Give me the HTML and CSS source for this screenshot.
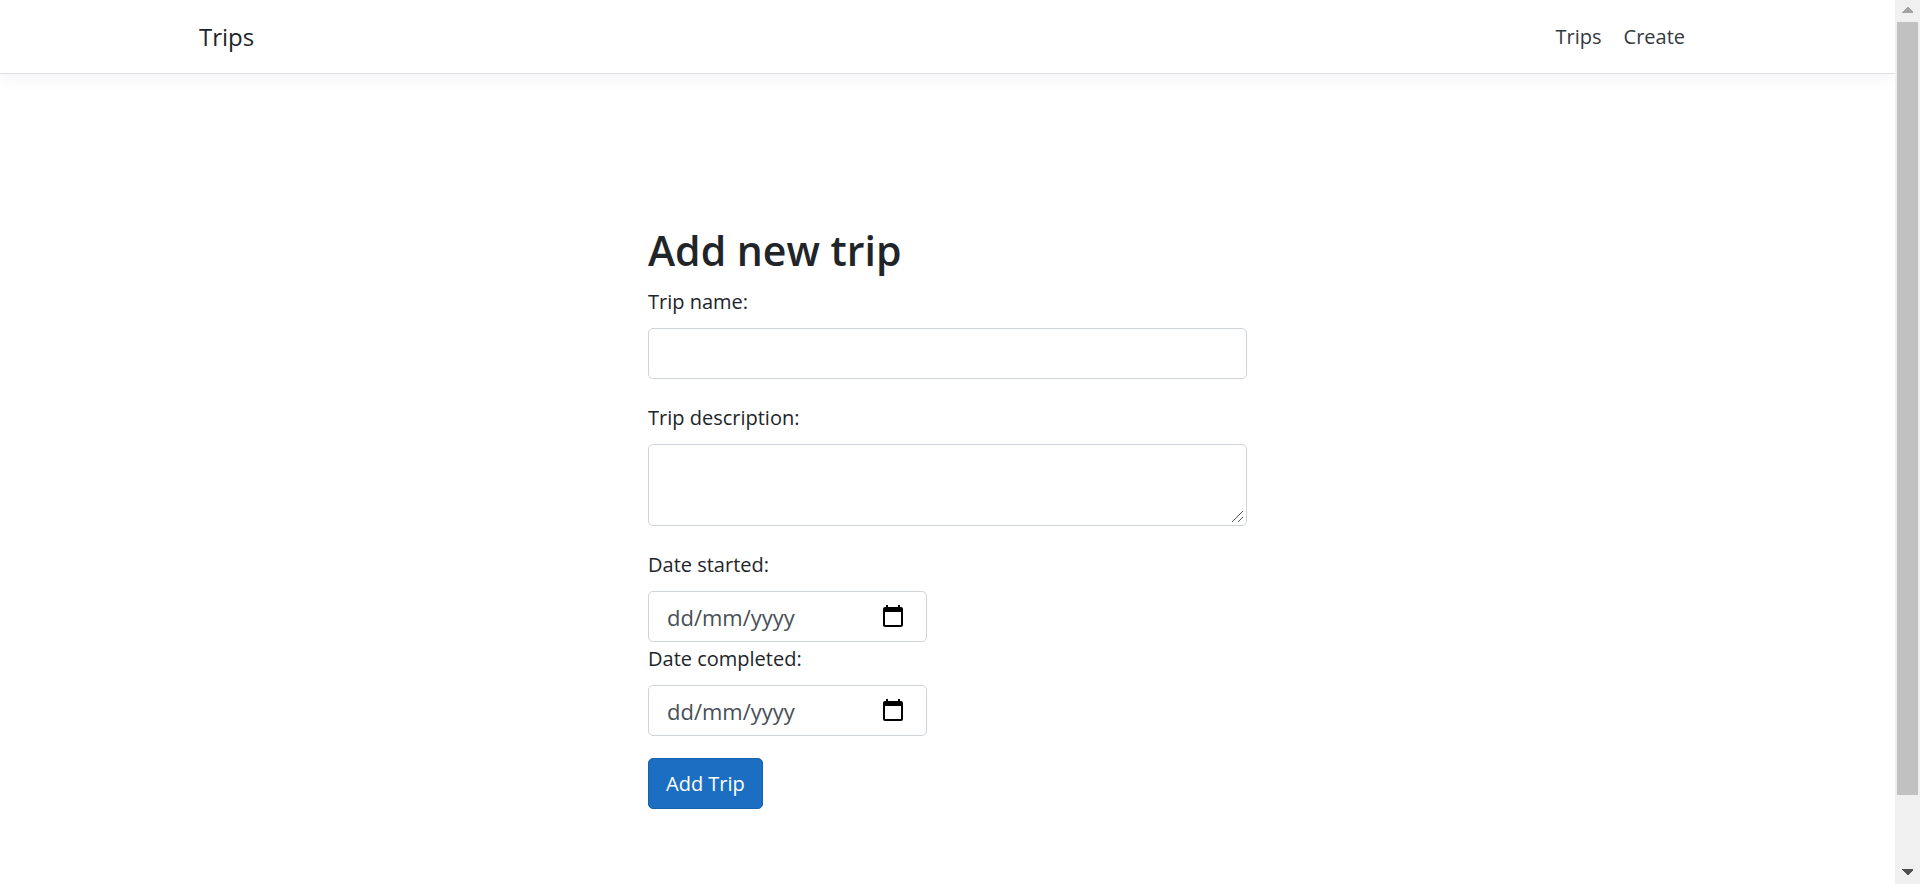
FILE: index.html
```html
<!DOCTYPE html>
<html lang="en-GB">
<head>
<meta charset="utf-8">
<meta name="viewport" content="width=device-width, initial-scale=1">
<title>Trips</title>
<link rel="stylesheet" href="styles.css">
</head>
<body>
<div class="viewport">
  <div class="page">
    <header class="navbar">
      <div class="container">
        <a class="brand" href="#">Trips</a>
        <nav class="nav">
          <a class="nav-link" href="#">Trips</a>
          <a class="nav-link" href="#">Create</a>
        </nav>
      </div>
    </header>
    <main class="content">
      <form class="trip-form">
        <h1 class="title">Add new trip</h1>
        <div class="group">
          <label class="label" for="name">Trip name:</label>
          <input class="control" id="name" type="text">
        </div>
        <div class="group">
          <label class="label" for="description">Trip description:</label>
          <textarea class="control area" id="description"></textarea>
        </div>
        <div class="group dates">
          <label class="label" for="started">Date started:</label>
          <div class="control date">
            <input class="date-input" id="started" type="text" placeholder="dd/mm/yyyy">
            <button class="picker" type="button" aria-label="Choose start date">
              <svg class="calendar" viewBox="0 0 20 23" aria-hidden="true"><path d="M2 2h1V0h2v2h10V0h2v2h1a2 2 0 0 1 2 2v16a2 2 0 0 1-2 2H2a2 2 0 0 1-2-2V4a2 2 0 0 1 2-2zM2 7v13h16V7z" fill-rule="evenodd"/></svg>
            </button>
          </div>
          <label class="label" for="completed">Date completed:</label>
          <div class="control date">
            <input class="date-input" id="completed" type="text" placeholder="dd/mm/yyyy">
            <button class="picker" type="button" aria-label="Choose completion date">
              <svg class="calendar" viewBox="0 0 20 23" aria-hidden="true"><path d="M2 2h1V0h2v2h10V0h2v2h1a2 2 0 0 1 2 2v16a2 2 0 0 1-2 2H2a2 2 0 0 1-2-2V4a2 2 0 0 1 2-2zM2 7v13h16V7z" fill-rule="evenodd"/></svg>
            </button>
          </div>
        </div>
        <button class="submit" type="submit">Add Trip</button>
      </form>
    </main>
  </div>
  <div class="scrollbar" aria-hidden="true">
    <svg class="arrow arrow-up" viewBox="0 0 25 22" shape-rendering="crispEdges"><path d="M7 13h11v-1l-5-5h-1l-5 5z"/></svg>
    <div class="track"><div class="thumb"></div></div>
    <svg class="arrow arrow-down" viewBox="0 0 25 22" shape-rendering="crispEdges"><path d="M7 7h11v1l-5 5h-1l-5-5z"/></svg>
  </div>
</div>
</body>
</html>
```
FILE: styles.css
```css
*, *::before, *::after { box-sizing: border-box; }

body {
  margin: 0;
  background: #fff;
  color: #212529;
  font-family: "Segoe UI", "Open Sans", "Noto Sans", sans-serif;
  font-size: 20px;
  line-height: 34px;
}

.viewport { display: flex; height: 100vh; }

.page { flex: 1; min-width: 0; overflow: hidden; }

.navbar {
  padding: 11px 0;
  border-bottom: 1px solid #dee2e6;
  box-shadow: 0 5px 16px rgba(0, 0, 0, 0.05);
}

.container {
  display: flex;
  align-items: center;
  justify-content: space-between;
  width: 79%;
  min-height: 51px;
  margin: 0 auto;
}

.brand { color: #212529; font-size: 24px; text-decoration: none; }

.nav { display: flex; }

.nav-link { padding: 0 11px; color: #343a40; text-decoration: none; }

.content { padding: 150px 22px 22px; }

.trip-form { max-width: 599px; margin: 0 auto; }

.title {
  margin: 0 0 9px;
  font-size: 41px;
  font-weight: 600;
  line-height: 52px;
}

.group { margin-bottom: 22px; }

.label { display: block; width: fit-content; margin-bottom: 9px; }

.control {
  display: block;
  width: 100%;
  height: 51px;
  padding: 8px 16px;
  border: 1px solid #ced4da;
  border-radius: 5px;
  background: #fff;
  color: #495057;
  font: inherit;
}

.area { height: 82px; resize: vertical; }

.area::-webkit-scrollbar { width: 18px; height: 18px; }

.area::-webkit-resizer {
  background: url("data:image/svg+xml,%3Csvg xmlns='http://www.w3.org/2000/svg' width='18' height='18'%3E%3Cpath d='M4 15L15 4M10 15L15 10' stroke='%23555' fill='none'/%3E%3C/svg%3E") no-repeat right bottom;
}

.date {
  display: flex;
  align-items: center;
  width: 279px;
  padding: 0 18px;
}

.date-input {
  flex: 1;
  min-width: 0;
  padding: 0;
  border: 0;
  outline: 0;
  background: transparent;
  color: #495057;
  font: inherit;
  font-size: 22px;
}

.date-input::placeholder { color: #495057; opacity: 1; }

.picker {
  display: flex;
  padding: 0 5px;
  border: 0;
  background: transparent;
}

.calendar { width: 20px; height: 23px; fill: #000; }

.submit {
  display: block;
  height: 51px;
  padding: 0 17px;
  border: 1px solid #1861ac;
  border-radius: 5px;
  background: #1b6ec2;
  color: #fff;
  font: inherit;
}

.scrollbar {
  display: flex;
  flex-direction: column;
  width: 25px;
  background: #f0f0f0;
}

.arrow { width: 25px; height: 22px; }
.arrow-up { fill: #a3a3a3; }
.arrow-down { fill: #505050; }

.track { flex: 1; padding: 0 2px; }
.thumb { height: 92%; background: #c1c1c1; }
```
